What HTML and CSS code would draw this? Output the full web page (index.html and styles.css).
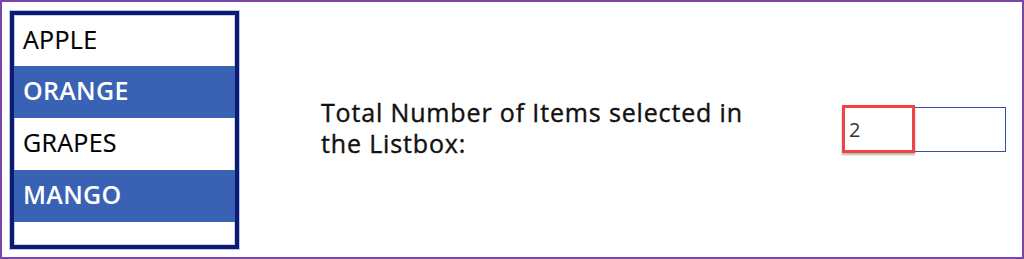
FILE: index.html
```html
<!DOCTYPE html>
<html>
<head>
<meta charset="utf-8">
<link rel="stylesheet" href="styles.css">
</head>
<body>
<div class="frame">
  <div class="listbox">
    <div class="row">APPLE</div>
    <div class="row sel">ORANGE</div>
    <div class="row">GRAPES</div>
    <div class="row sel">MANGO</div>
  </div>
  <div class="label">Total Number of Items selected in<br>the Listbox:</div>
  <div class="field">
    <div class="input">2</div>
    <div class="highlight"></div>
  </div>
</div>
</body>
</html>
```
FILE: styles.css
```css
html, body {
  margin: 0;
  padding: 0;
  background: #ffffff;
}
.frame {
  box-sizing: border-box;
  width: 1024px;
  height: 259px;
  border: 2px solid #7b44a6;
  display: flex;
  align-items: center;
  font-family: "Open Sans", "Liberation Sans", sans-serif;
}
.listbox {
  box-sizing: border-box;
  width: 229px;
  height: 238px;
  margin-left: 8px;
  margin-top: 0;
  border: 4px solid #0b1a72;
  box-shadow: 0 0 0 1px #bcc4e4, inset 0 0 0 1px #c8cfea;
  background: #ffffff;
  display: flex;
  flex-direction: column;
}
.row {
  height: 52px;
  flex: none;
  box-sizing: border-box;
  padding-left: 9px;
  padding-bottom: 3px;
  display: flex;
  align-items: center;
  font-size: 25px;
  color: #000000;
  letter-spacing: 0.3px;
  -webkit-text-stroke: 0.2px #000000;
}
.row:first-child {
  height: 51px;
}
.row.sel {
  background: #3a62b4;
  color: #ffffff;
  font-weight: 600;
  -webkit-text-stroke: 0;
}
.label {
  margin-left: 82px;
  font-size: 25px;
  font-weight: 400;
  line-height: 31px;
  color: #111111;
  letter-spacing: 0.85px;
  -webkit-text-stroke: 0.4px #111111;
  margin-top: -4px;
}
.field {
  position: relative;
  margin-left: auto;
  margin-right: 16px;
  margin-top: 0;
}
.input {
  box-sizing: border-box;
  width: 164px;
  height: 45px;
  border: 1px solid #3b4ca6;
  padding-left: 6px;
  display: flex;
  align-items: center;
  font-size: 20px;
  color: #333333;
}
.highlight {
  position: absolute;
  left: 0;
  top: -2px;
  width: 73px;
  height: 48px;
  box-sizing: border-box;
  border: 3px solid #ee4444;
  box-shadow: 0 2px 2px rgba(0, 0, 0, 0.3);
}
```
